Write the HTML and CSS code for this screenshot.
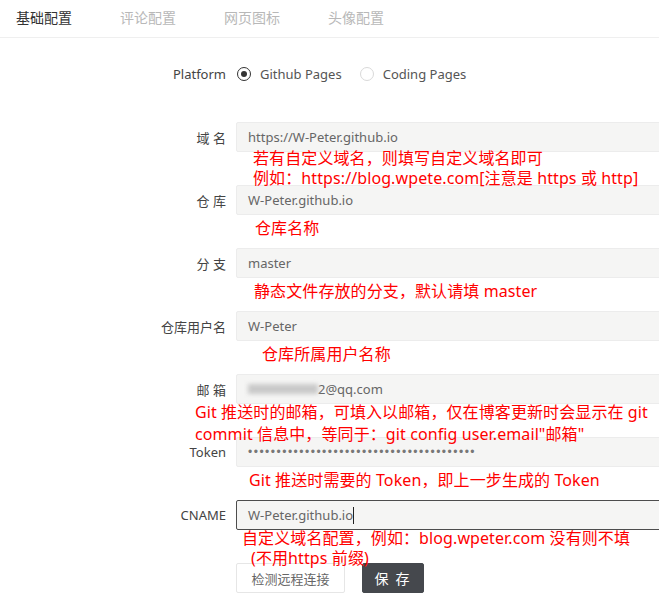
FILE: index.html
```html
<!DOCTYPE html>
<html lang="zh-CN">
<head>
<meta charset="utf-8">
<link rel="stylesheet" href="styles.css">
</head>
<body>
<div class="page">
  <nav class="tabs">
    <span class="tab tab-active">基础配置</span>
    <span class="tab">评论配置</span>
    <span class="tab">网页图标</span>
    <span class="tab">头像配置</span>
  </nav>

  <div class="form">
    <div class="row platform-row">
      <label class="label">Platform</label>
      <div class="radios">
        <span class="radio radio-checked"></span><span class="radio-text">Github Pages</span>
        <span class="radio"></span><span class="radio-text">Coding Pages</span>
      </div>
    </div>

    <div class="item">
      <div class="row">
        <label class="label">域 名</label>
        <div class="input">https://W-Peter.github.io</div>
      </div>
      <div class="note-area"><div class="note note-domain">若有自定义域名，则填写自定义域名即可<br>例如：https://blog.wpete.com[注意是 https 或 http]</div></div>
    </div>

    <div class="item">
      <div class="row">
        <label class="label">仓 库</label>
        <div class="input">W-Peter.github.io</div>
      </div>
      <div class="note-area"><div class="note note-repo">仓库名称</div></div>
    </div>

    <div class="item">
      <div class="row">
        <label class="label">分 支</label>
        <div class="input">master</div>
      </div>
      <div class="note-area"><div class="note note-branch">静态文件存放的分支，默认请填 master</div></div>
    </div>

    <div class="item">
      <div class="row">
        <label class="label">仓库用户名</label>
        <div class="input">W-Peter</div>
      </div>
      <div class="note-area"><div class="note note-user">仓库所属用户名称</div></div>
    </div>

    <div class="item">
      <div class="row">
        <label class="label">邮 箱</label>
        <div class="input"><span class="blurred"></span>2@qq.com</div>
      </div>
      <div class="note-area"><div class="note note-email">Git 推送时的邮箱，可填入以邮箱，仅在博客更新时会显示在 git<br>commit 信息中，等同于：git config user.email"邮箱"</div></div>
    </div>

    <div class="item">
      <div class="row">
        <label class="label">Token</label>
        <div class="input"><span class="dots">••••••••••••••••••••••••••••••••••••••••</span></div>
      </div>
      <div class="note-area"><div class="note note-token">Git 推送时需要的 Token，即上一步生成的 Token</div></div>
    </div>

    <div class="item">
      <div class="row">
        <label class="label">CNAME</label>
        <div class="input input-focus">W-Peter.github.io<span class="caret"></span></div>
      </div>
      <div class="note-area"><div class="note note-cname">自定义域名配置，例如：blog.wpeter.com 没有则不填<span class="note-line2">(不用https 前缀)</span></div></div>
    </div>

    <div class="row">
      <span></span>
      <div class="buttons">
        <button class="btn btn-light">检测远程连接</button>
        <button class="btn btn-dark">保 存</button>
      </div>
    </div>
  </div>
</div>
</body>
</html>
```

FILE: styles.css
```css
html, body {
  margin: 0;
  padding: 0;
  background: #fff;
  overflow: hidden;
}

body {
  font-family: "Noto Sans", "Noto Sans CJK SC", sans-serif;
  color: #333;
}

.page {
  width: 659px;
  height: 607px;
  overflow: hidden;
}

.tabs {
  display: flex;
  gap: 48px;
  padding-left: 16px;
  border-bottom: 1px solid #efefef;
  align-items: center;
  padding-bottom: 3px;
  box-sizing: content-box;
  height: 34px;
}

.tab {
  font-family: "Noto Sans CJK SC", sans-serif;
  font-size: 14px;
  color: #b8b8b8;
  width: 56px;
}

.tab-active {
  color: #333;
}

.form {
  width: 620px;
  margin-left: 126px;
}

.row {
  display: grid;
  grid-template-columns: 100px 1fr;
  column-gap: 10px;
  height: 30px;
  align-items: center;
}

.platform-row {
  margin-top: 21px;
  margin-bottom: 33px;
}

.label {
  text-align: right;
  font-size: 13px;
  color: #444;
  white-space: nowrap;
}

.radios {
  display: flex;
  align-items: center;
  font-size: 13px;
  color: #555;
}

.radio {
  width: 12px;
  height: 12px;
  border: 1px solid #d9d9d9;
  border-radius: 50%;
  display: flex;
  align-items: center;
  justify-content: center;
  margin-left: 1px;
  margin-right: 9px;
}

.radio-checked {
  border-color: #333;
}

.radio-checked::after {
  content: "";
  width: 6px;
  height: 6px;
  border-radius: 50%;
  background: #333;
}

.radio-text {
  margin-right: 17px;
}

.input {
  height: 28px;
  border: 1px solid #ececec;
  background: #f5f5f4;
  border-radius: 2px;
  padding-left: 11px;
  display: flex;
  align-items: center;
  font-size: 13px;
  color: #666;
  white-space: nowrap;
}

.input-focus {
  border-color: #4d4d4d;
}

.caret {
  width: 1px;
  height: 17px;
  background: #222;
}

.blurred {
  display: inline-block;
  width: 70px;
  height: 10px;
  background: #c9c9c9;
  filter: blur(2px);
}

.dots {
  font-family: "Liberation Sans", sans-serif;
  font-size: 12px;
  letter-spacing: 1.5px;
  color: #777;
}

.note-area {
  display: flow-root;
  height: 33px;
  padding-left: 110px;
}

.note {
  position: relative;
  z-index: 1;
  font-family: "Noto Sans", "Noto Sans CJK SC", sans-serif;
  font-size: 16px;
  line-height: 20px;
  color: #ff0000;
  white-space: nowrap;
  letter-spacing: 0.1px;
}

.note-domain {
  margin-left: 17px;
  margin-top: -4px;
}

.note-repo {
  margin-left: 19px;
  margin-top: 3px;
}

.note-branch {
  margin-left: 18px;
  margin-top: 3px;
}

.note-user {
  margin-left: 26px;
  margin-top: 3px;
}

.note-email {
  margin-left: -41px;
  margin-top: -3px;
  line-height: 22px;
}

.note-token {
  margin-left: 13px;
  margin-top: 3px;
}

.note-cname {
  margin-left: 6px;
  margin-top: -2px;
}

.note-line2 {
  display: block;
  margin-left: 9px;
}

.buttons {
  display: flex;
  gap: 17px;
  align-items: center;
}

.btn {
  height: 30px;
  border-radius: 2px;
  font-family: "Noto Sans CJK SC", sans-serif;
  cursor: pointer;
  padding: 0;
}

.btn-light {
  width: 109px;
  background: #fff;
  border: 1px solid #e6e6e6;
  color: #666;
  font-size: 13px;
}

.btn-dark {
  width: 62px;
  background: #45484d;
  border: 1px solid #45484d;
  color: #fff;
  font-size: 14px;
  letter-spacing: 2px;
}
```
